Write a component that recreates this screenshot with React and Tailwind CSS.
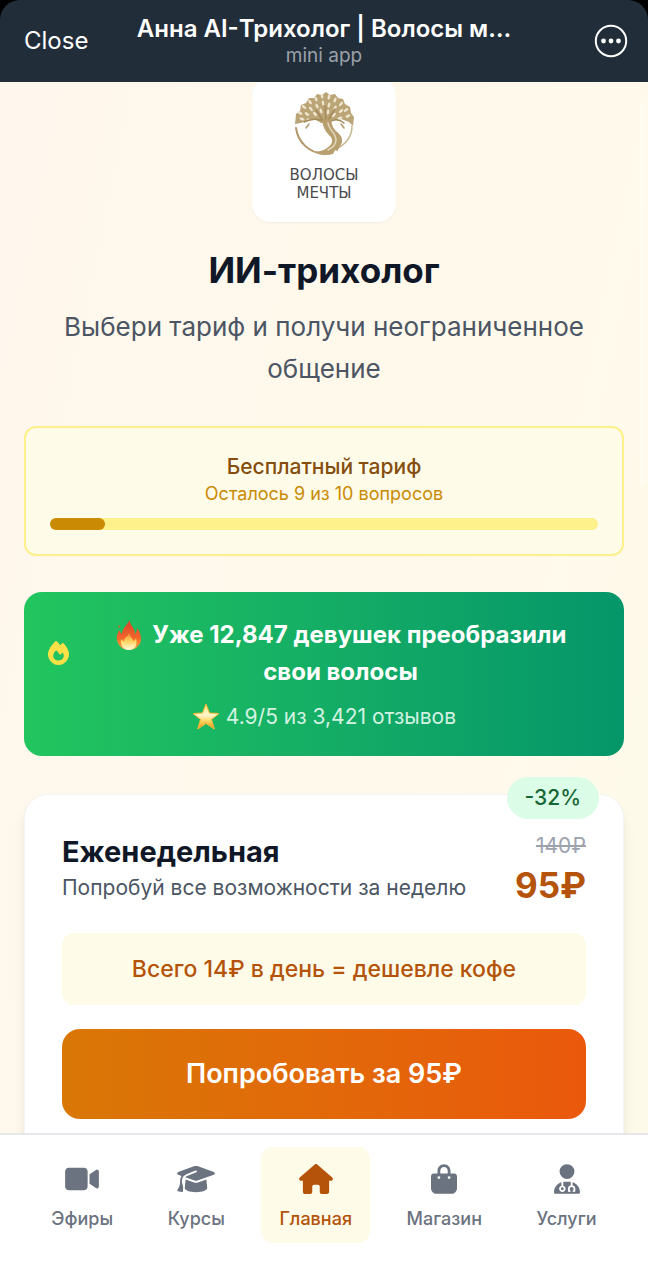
import { FaBagShopping, FaFire, FaGraduationCap, FaHouse, FaUserDoctor, FaVideo } from 'react-icons/fa6'

const tabs = [
  { id: 'live',     label: 'Эфиры',   icon: FaVideo,         width: 'w-[34px]' },
  { id: 'courses',  label: 'Курсы',   icon: FaGraduationCap, width: 'w-[38px]' },
  { id: 'home',     label: 'Главная', icon: FaHouse,         width: 'w-[34px]', active: true },
  { id: 'shop',     label: 'Магазин', icon: FaBagShopping,   width: 'w-[26px]' },
  { id: 'services', label: 'Услуги',  icon: FaUserDoctor,    width: 'w-[26px]' },
]

const quota = { left: 9, total: 10 }

// просветы в кроне: x, y, наклон
const leaves = [
  [8, 23, -60], [12, 17, -50], [15, 24, -55], [18, 12, -35], [19, 19, -40], [24, 9, -20],
  [25, 16, -25], [23, 24, -45], [30, 6, -5], [31, 13, -5], [29, 21, -20], [37, 7, 10],
  [37, 15, 10], [36, 22, 10], [43, 10, 25], [43, 18, 30], [42, 25, 40], [49, 14, 40],
  [49, 21, 50], [54, 20, 55], [56, 26, 65], [48, 28, 70], [10, 29, -70], [17, 30, -75],
]

function TreeLogo() {
  return (
    <svg viewBox="0 0 64 68" className="w-16 h-[68px]" fill="none" stroke="#b39a6b" strokeLinecap="round">
      <path
        fill="#bba577" stroke="none"
        d="M3 34l1-10 4-3 1-6 5-2 3-5 5 0 3-4 5 1 4-3 4 3 5-1 3 4 5 1 2 5 5 3 1 6 3 4-1 9-4-4-8-3-9 1-4 3-7 0-5-3-8 0-7 3z"
      />
      {leaves.map(([x, y, a]) => (
        <ellipse key={`${x}-${y}`} cx={x} cy={y} rx="1.3" ry="2.6" transform={`rotate(${a} ${x} ${y})`} fill="#efe6d0" stroke="none" />
      ))}
      <path d="M12 32c6-3 12-4 20-1M52 33c-5-4-11-4-16 0M32 32L24 20M34 30l-1-14M36 30l7-11" strokeWidth="1.500" stroke="#a48a58" />
      <path d="M4 38c2 14 13 25 28 26" strokeWidth="2" />
      <path d="M46 58c9-5 14-13 14-22" strokeWidth="1.500" stroke="#c9b78f" />
      <path
        fill="#b79f6f" stroke="none"
        d="M30 30c1 8 4 12 8 16 4 4 2 9-3 12-4 3-9 4-14 3 5 4 13 5 20 3l2-4 3 1c0-3 3-5 4-9 1-6-4-9-7-12-3-4-4-7-3-11z"
      />
      <path d="M36 33c1 7 8 10 8 17 0 5-4 8-8 10" strokeWidth="1.500" stroke="#e4d8bc" />
      <path d="M14 38l3-4M52 38l-3-4" strokeWidth="1.500" />
    </svg>
  )
}

function FlameEmoji() {
  return (
    <svg viewBox="0 0 28 30" className="inline-block w-7 h-[30px] mr-1 align-[-7px]" aria-label="огонь">
      <defs>
        <linearGradient id="flame" x1="0" y1="0" x2="0" y2="1">
          <stop offset="0" stopColor="#d9432a" />
          <stop offset="0.6" stopColor="#f2662b" />
          <stop offset="1" stopColor="#f9b03a" />
        </linearGradient>
        <linearGradient id="flameCore" x1="0" y1="0" x2="0" y2="1">
          <stop offset="0" stopColor="#f98a33" />
          <stop offset="0.5" stopColor="#ffd562" />
          <stop offset="1" stopColor="#fffbe0" />
        </linearGradient>
      </defs>
      <path fill="url(#flame)" d="M15 0c-1 5 5 7 5 14 1-1 2-3 2-6 3 3 4 8 4 12-1 6-6 10-12 10S3 26 2 20c-1-4 1-7 2-10 1 2 2 3 3 4C7 9 11 6 15 0zM4 5c1 1 1 2 0 3-1-1-1-2 0-3z" />
      <path fill="url(#flameCore)" d="M14 13c1 4 4 5 4 8 1 0 2-1 3-3 2 7-1 12-7 12S5 25 6 19c1 1 2 2 3 2 0-4 4-4 5-8z" />
    </svg>
  )
}

function StarEmoji() {
  return (
    <svg viewBox="0 0 28 28" className="inline-block w-7 h-7 align-[-7px]" aria-label="звезда">
      <defs>
        <linearGradient id="star" x1="0" y1="0" x2="0" y2="1">
          <stop offset="0" stopColor="#ffe873" />
          <stop offset="0.45" stopColor="#fff6cc" />
          <stop offset="0.7" stopColor="#fdd25a" />
          <stop offset="1" stopColor="#f08a1c" />
        </linearGradient>
      </defs>
      <path fill="url(#star)" stroke="#f7b733" strokeLinejoin="round" d="M14 1l3.500 9 9.500.5-7.500 6 2.800 9.500-8.300-5.500-8.300 5.500 2.800-9.500-7.500-6 9.500-.5z" />
    </svg>
  )
}

function TopBar() {
  return (
    <div className="bg-black shrink-0">
      <header className="flex items-center justify-between h-[82px] px-5 rounded-t-[20px] bg-[#222d3a] text-white">
        <button className="w-24 pl-1 text-left text-[24px] leading-[30px]">Close</button>
        <div className="min-w-0 text-center">
          <div className="text-[24px] leading-[30px] font-semibold">Анна AI-Трихолог | Волосы м…</div>
          <div className="text-[19px] leading-[24px] text-[#9aa1a9]">mini app</div>
        </div>
        <div className="w-24 flex justify-end">
          <button aria-label="Меню">
            <svg viewBox="0 0 34 34" className="w-[34px] h-[34px]">
              <circle cx="17" cy="17" r="15.200" fill="none" stroke="#fff" strokeWidth="2" />
              <circle cx="9.500" cy="17" r="2.400" fill="#fff" />
              <circle cx="17" cy="17" r="2.400" fill="#fff" />
              <circle cx="24.500" cy="17" r="2.400" fill="#fff" />
            </svg>
          </button>
        </div>
      </header>
    </div>
  )
}

function PlanCard() {
  return (
    <section className="relative mt-[38px] px-[37px] pt-9 pb-12 rounded-3xl bg-white border border-gray-100 shadow-lg">
      <span className="absolute -top-[18px] right-6 h-[42px] px-[18px] rounded-full bg-green-100 text-[21px] leading-[42px] font-medium text-[#166534]">
        -32%
      </span>

      <div className="flex items-start justify-between mb-6">
        <div>
          <h2 className="text-[29px] leading-[42px] font-bold text-gray-900">Еженедельная</h2>
          <p className="text-[21px] leading-[30px] text-[#4b5563]">Попробуй все возможности за неделю</p>
        </div>
        <div className="text-right">
          <div className="text-[21px] leading-[30px] text-[#9ca3af] line-through">140₽</div>
          <div className="text-[35px] leading-[48px] font-bold text-[#b45309]">95₽</div>
        </div>
      </div>

      <p className="mb-6 p-[18px] rounded-xl bg-[#fefce8] text-center text-[23px] leading-[36px] font-medium text-[#b45309]">
        Всего 14₽ в день = дешевле кофе
      </p>

      <button className="w-full py-6 rounded-[18px] bg-linear-to-r from-[#d97706] to-[#ea580c] text-[27px] leading-[42px] font-semibold text-white">
        Попробовать за 95₽
      </button>
    </section>
  )
}

export default function App() {
  return (
    <div className="h-screen flex flex-col font-['Inter','Noto_Sans',sans-serif] bg-white">
      <TopBar />

      <main className="relative flex-1 min-h-0 overflow-hidden">
        <div className="flow-root min-h-[250vh] px-6 bg-linear-to-br from-[#fff7ed] to-[#fefce8]">
          <div className="-mt-1 mx-auto w-36 h-36 rounded-[18px] bg-white shadow-xs flex flex-col items-center pt-3">
            <TreeLogo />
            <div className="mt-2 text-center font-['DejaVu_Sans',sans-serif] text-[15px] leading-[18px] text-[#4a4a4c]">
              ВОЛОСЫ<br />МЕЧТЫ
            </div>
          </div>

          <h1 className="mt-6 text-center text-[35px] leading-[48px] font-bold text-gray-900">ИИ-трихолог</h1>
          <p className="mt-3 text-center text-[26px] leading-[42px] text-[#4b5563]">
            Выбери тариф и получи неограниченное общение
          </p>

          {/* Остаток бесплатных вопросов */}
          <section className="mt-9 p-6 rounded-xl border-2 border-[#fef08a] bg-[#fefce8] text-center">
            <div className="text-[21px] leading-[30px] font-medium text-[#854d0e]">Бесплатный тариф</div>
            <div className="text-[18px] leading-[24px] text-[#ca8a04]">
              Осталось {quota.left} из {quota.total} вопросов
            </div>
            <div className="mt-3 h-3 rounded-full bg-[#fef08a]">
              <div
                className="h-3 rounded-full bg-[#ca8a04]"
                style={{ width: `${(1 - quota.left / quota.total) * 100}%` }}
              />
            </div>
          </section>

          {/* Отзывы */}
          <section className="mt-9 p-6 rounded-[18px] bg-linear-to-r from-[#22c55e] to-[#059669] text-center text-white">
            <div className="flex items-center">
              <FaFire className="w-[21px] h-6 shrink-0 text-[#fde047]" />
              <div className="flex-1 pl-6 pr-3 text-[24px] leading-[37px] font-bold">
                <FlameEmoji /> Уже 12,847 девушек преобразили свои волосы
              </div>
            </div>
            <div className="mt-3 text-[21px] leading-[30px] text-[#d3f3e2]">
              <StarEmoji /> 4.9/5 из 3,421 отзывов
            </div>
          </section>

          <PlanCard />
        </div>

        {/* Полоса прокрутки */}
        <div className="absolute top-5 right-1 w-1 h-96 rounded-full bg-white/40" />
      </main>

      <nav className="shrink-0 flex justify-around px-6 pt-3 pb-[37px] border-t-2 border-gray-200 bg-white">
        {tabs.map(({ id, label, icon: Icon, width, active }) => (
          <a key={id} href={`#${id}`}
            className={`flex flex-col items-center px-[18px] py-3 rounded-xl ${
              active ? 'bg-[#fefce8] text-[#b45309]' : 'text-[#6b7280]'
            }`}>
            <span className="h-10 flex items-center">
              <Icon className={`h-[30px] ${width}`} />
            </span>
            <span className="mt-2 text-[18px] leading-[24px] font-medium">{label}</span>
          </a>
        ))}
      </nav>
    </div>
  )
}
